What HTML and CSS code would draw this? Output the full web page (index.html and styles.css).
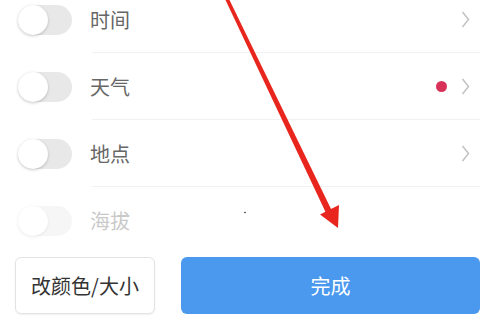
FILE: index.html
```html
<!DOCTYPE html>
<html lang="zh-CN">
<head>
<meta charset="utf-8">
<title>设置</title>
<link rel="stylesheet" href="styles.css">
</head>
<body>
<div class="page">
  <ul class="list">
    <li class="row">
      <span class="toggle"><span class="knob"></span></span>
      <span class="label">时间</span>
      <svg class="chev" width="9" height="17" viewBox="0 0 9 17"><polyline points="1.5,1 7.5,8.5 1.5,16" fill="none" stroke="#c2c2c2" stroke-width="1.5"/></svg>
    </li>
    <li class="row">
      <span class="toggle"><span class="knob"></span></span>
      <span class="label">天气</span>
      <span class="dot"></span>
      <svg class="chev" width="9" height="17" viewBox="0 0 9 17"><polyline points="1.5,1 7.5,8.5 1.5,16" fill="none" stroke="#c2c2c2" stroke-width="1.5"/></svg>
    </li>
    <li class="row">
      <span class="toggle"><span class="knob"></span></span>
      <span class="label">地点</span>
      <svg class="chev" width="9" height="17" viewBox="0 0 9 17"><polyline points="1.5,1 7.5,8.5 1.5,16" fill="none" stroke="#c2c2c2" stroke-width="1.5"/></svg>
    </li>
    <li class="row row-disabled">
      <span class="toggle"><span class="knob"></span></span>
      <span class="label">海拔</span>
    </li>
  </ul>
  <div class="footer">
    <button class="btn btn-plain">改颜色/大小</button>
    <button class="btn btn-primary">完成</button>
  </div>
  <svg class="arrow" width="496" height="321" viewBox="0 0 496 321">
    <polygon points="225.5,0 229.5,0 332,211 326,213" fill="#e8261d"/>
    <polygon points="338,228 320,214.5 339,205" fill="#e8261d"/>
    <circle cx="245" cy="212.5" r="0.8" fill="#222"/>
  </svg>
</div>
</body>
</html>
```

FILE: styles.css
```css
* { box-sizing: border-box; }
html, body {
  margin: 0;
  padding: 0;
  background: #fff;
  overflow: hidden;
}
body {
  font-family: "Noto Sans CJK SC", "Noto Sans", sans-serif;
}
.page {
  position: relative;
  width: 496px;
  height: 321px;
  overflow: hidden;
}
.list {
  list-style: none;
  margin: -14px 0 0 0;
  padding: 0;
}
.row {
  display: flex;
  align-items: center;
  height: 67px;
  padding-left: 18px;
  padding-right: 26px;
  position: relative;
}
.row::after {
  content: "";
  position: absolute;
  left: 92px;
  right: 16px;
  bottom: 0;
  height: 1px;
  background: #f1f1f1;
}
.row-disabled::after { display: none; }
.toggle {
  position: relative;
  width: 54px;
  height: 30px;
  border-radius: 15px;
  background: #e8e8e8;
  flex: none;
}
.knob {
  position: absolute;
  left: 0;
  top: 0;
  width: 30px;
  height: 30px;
  border-radius: 50%;
  background: #fff;
  box-shadow: 0 1px 3px rgba(0,0,0,0.22);
}
.label {
  flex: 1;
  margin-left: 18px;
  font-size: 20px;
  color: #676767;
  line-height: 1;
}
.row-disabled .toggle,
.row-disabled .label { opacity: 0.35; }
.dot {
  width: 11px;
  height: 11px;
  border-radius: 50%;
  background: #d8325b;
  margin-right: 14px;
  flex: none;
}
.chev { flex: none; display: block; }
.footer {
  display: flex;
  gap: 26px;
  padding: 3px 16px 0 15px;
}
.btn {
  height: 57px;
  border-radius: 6px;
  font-family: "Noto Sans CJK SC", "Noto Sans", sans-serif;
  font-size: 20px;
  padding: 0;
  cursor: pointer;
}
.btn-plain {
  width: 140px;
  background: #fff;
  color: #333;
  border: 1px solid #e3e3e3;
  box-shadow: 0 1px 2px rgba(0,0,0,0.06);
}
.btn-primary {
  flex: 1;
  background: #4a99ee;
  color: #fff;
  border: none;
}
.arrow {
  position: absolute;
  left: 0;
  top: 0;
  pointer-events: none;
}
```
